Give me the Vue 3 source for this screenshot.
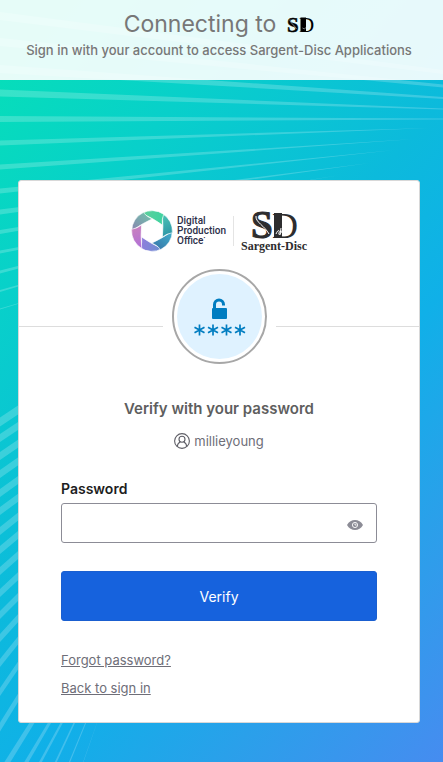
<template>
  <div class="page">
    <!-- Gradient backdrop with light rays -->
    <svg class="backdrop" viewBox="0 0 443 762" preserveAspectRatio="xMinYMin slice" aria-hidden="true">
      <path v-for="(ray, i) in rays" :key="i" :d="ray" fill="#fff" fill-opacity="0.2" />
    </svg>

    <header class="banner">
      <h1>
        Connecting to
        <svg class="banner-logo" viewBox="0 0 54 34" role="img" aria-label="SD">
          <g fill="#000" font-family="Liberation Serif, serif">
            <text x="0" y="31" font-size="42" font-weight="700" stroke="#000" stroke-width="1">S</text>
            <text x="24" y="31" font-size="42">D</text>
            <rect x="27" y="3" width="11" height="28" />
          </g>
          <path d="M6 7c-1 6 9 11 13 19M31 24l4 2 4-4" fill="none" stroke="#e8faf9" stroke-width="1" />
        </svg>
      </h1>
      <p>Sign in with your account to access Sargent-Disc Applications</p>
    </header>

    <main>
      <section class="card">
        <div class="logos">
          <svg class="aperture" viewBox="-21 -21 42 42" aria-hidden="true">
            <defs>
              <linearGradient v-for="(blade, i) in blades" :id="'blade' + i" :key="i"
                gradientUnits="userSpaceOnUse" x1="17" y1="8" x2="1" y2="20">
                <stop offset="0" :stop-color="blade[0]" />
                <stop offset="1" :stop-color="blade[1]" />
              </linearGradient>
            </defs>
            <g transform="scale(-1 1) rotate(30)">
              <path v-for="(blade, i) in blades" :key="i" d="M18.500 8.700Q14 5 12 0Q8 9 .2 20.300A20.300 20.300 0 0 0 18.500 8.700Z"
                :transform="`rotate(${i * 60})`" :fill="`url(#blade${i})`" stroke="#fff" stroke-width="0.600" />
            </g>
          </svg>
          <div class="office">Digital<br>Production<br>Office<sup>•</sup></div>
          <div class="sargent">
            <svg viewBox="0 0 48 30" role="img" aria-label="SD">
              <g fill="#2d2d2f" font-family="Liberation Serif, serif">
                <text x="1" y="28" font-size="39" font-weight="700" stroke="#2d2d2f" stroke-width="1">S</text>
                <text x="22" y="28" font-size="36">D</text>
                <rect x="24" y="3" width="8" height="25" />
              </g>
              <path d="M6 6c-1 6 9 10 13 18" fill="none" stroke="#fff" stroke-width="1" />
              <path d="M26 24c2-5 4-4 3-1s2 1 3-2 2-2 1 1 2 1 3-1M31 18l-1 7" fill="none" stroke="#fff" stroke-width="1" />
            </svg>
            <span>Sargent-Disc</span>
          </div>
        </div>

        <div class="beacon-row">
          <span class="line"></span>
          <div class="beacon">
            <svg viewBox="0 0 85 85" aria-hidden="true">
              <circle cx="42.5" cy="42.5" r="42.5" fill="#dff2ff" />
              <rect x="35" y="34" width="15" height="11" rx="1" fill="#007dc1" />
              <path d="M37.500 34v-3.500a4.500 4.500 0 0 1 9 0v1" fill="none" stroke="#007dc1" stroke-width="3" />
              <g stroke="#007dc1" stroke-width="1.700">
                <path v-for="x in [22.5, 36, 49.5, 63]" :key="x"
                  :d="`M${x} 50.500v11M${x - 5} 53.200l10 5.600M${x - 5} 58.800l10-5.600`" />
              </g>
            </svg>
          </div>
          <span class="line"></span>
        </div>

        <form @submit.prevent>
          <h2>Verify with your password</h2>
          <div class="user">
            <svg viewBox="0 0 16 16" fill="none" stroke="#5e5e66" stroke-width="1.100" aria-hidden="true">
              <circle cx="8" cy="8" r="7.400" />
              <circle cx="8" cy="6.300" r="3" />
              <path d="M3.300 13.500c.2-2.600 1.300-4 3-4.600M12.700 13.500c-.2-2.600-1.300-4-3-4.600" />
            </svg>
            <span>millieyoung</span>
          </div>

          <label for="password">Password</label>
          <div class="field">
            <input id="password" v-model="password" :type="visible ? 'text' : 'password'">
            <button type="button" class="eye" aria-label="Show password" @click="visible = !visible">
              <svg viewBox="0 0 16 10">
                <path d="M0 5C3.500-1.600 12.500-1.600 16 5 12.500 11.600 3.500 11.600 0 5Z" fill="#8c8c96" />
                <circle cx="8" cy="5" r="2.600" fill="none" stroke="#fff" stroke-width="0.900" />
                <path d="M8 3.500V5h1.500" fill="none" stroke="#fff" stroke-width="0.900" />
              </svg>
            </button>
          </div>

          <button type="submit" class="verify">Verify</button>

          <nav>
            <a href="#">Forgot password?</a>
            <a href="#">Back to sign in</a>
          </nav>
        </form>
      </section>
    </main>
  </div>
</template>

<script setup>
import { ref } from 'vue'

const password = ref('')
const visible = ref(false)

// start x, start y, end x, end y, start width, end width
const lines = [
  [0, 16, 443, 72, 8, 4],
  [0, 42, 443, 86, 8, 3],
  [0, 69, 443, 98, 8, 2],
  [0, 93, 443, 109, 7, 1],
  [0, 119, 443, 119, 6, 1],
  [0, 143, 430, 128, 5, 0],
  [0, 167, 415, 139, 5, 0],
  [0, 191, 395, 150, 5, 0],
  [0, 212, 370, 163, 5, 0],
  [0, 232, 340, 175, 4, 0],
  [0, 252, 300, 195, 3, 0],
  [0, 272, 200, 220, 3, 0],
  [0, 291, 100, 262, 2, 0],
  [0, 309, 60, 291, 1, 0],
  [0, 422, 60, 382, 9, 9],
  [0, 438, 60, 398, 8, 8],
  [0, 456, 60, 415, 8, 8],
  [0, 474, 60, 432, 8, 8],
  [0, 493, 60, 450, 8, 8],
  [0, 511, 60, 467, 8, 8],
  [0, 531, 60, 483, 8, 8],
  [0, 550, 60, 500, 8, 8],
  [0, 571, 60, 518, 8, 8],
  [0, 593, 60, 537, 8, 8],
  [0, 615, 60, 555, 8, 8],
  [0, 638, 60, 572, 8, 8],
  [0, 663, 60, 588, 8, 8],
  [0, 692, 60, 604, 8, 8],
  [0, 727, 60, 630, 9, 7],
  [0, 774, 60, 678, 10, 7],
  [0, 807, 60, 705, 9, 5],
  [20, 800, 74, 700, 6, 4],
  [38, 800, 85, 700, 5, 3],
  [54, 800, 95, 700, 4, 2],
  [70, 800, 105, 700, 2, 0]
]

const rays = lines.map(([x1, y1, x2, y2, a, b]) =>
  `M${x1} ${y1 - a / 2}L${x2} ${y2 - b / 2}V${y2 + b / 2}L${x1} ${y1 + a / 2}Z`)

// clockwise pairs, starting from the bottom blade
const blades = [
  ['#8f7fdc', '#6b8fd0'],
  ['#3a7fae', '#3fb0cc'],
  ['#2f9aa8', '#4cc4b4'],
  ['#3fd3a0', '#5fcf9c'],
  ['#74b8ac', '#8a86b0'],
  ['#c77fc0', '#b070d8']
]
</script>

<style>
body {
  margin: 0;
}
</style>

<style scoped>
* {
  box-sizing: border-box;
}

.page {
  position: relative;
  min-height: 100vh;
  padding-bottom: 39px;
  overflow: hidden;
  font-family: Inter, "Liberation Sans", sans-serif;
  background: linear-gradient(131deg, #06e2b5 0%, #08d0ca 24%, #0cbadc 48%, #10b0e8 63%, #2aa0ea 80%, #468cf0 100%);
}

.backdrop {
  position: absolute;
  top: 0;
  left: 0;
  width: 100%;
  height: 100%;
}

.banner {
  position: relative;
  height: 80px;
  padding: 8px 5px 0 0;
  text-align: center;
  color: #777;
  background: rgba(255, 255, 255, 0.9);
}

h1 {
  display: flex;
  justify-content: center;
  align-items: center;
  gap: 11px;
  margin: 0;
  font-size: 23px;
  line-height: 32px;
  font-weight: 400;
}

.banner-logo {
  width: 27px;
  height: 17px;
  overflow: visible;
}

.banner p {
  margin: 0;
  font-size: 13px;
  line-height: 20px;
  font-weight: 500;
  white-space: nowrap;
}

main {
  position: relative;
  padding: 100px 23px 0 18px;
}

.card {
  max-width: 402px;
  margin: 0 auto;
  background: #fff;
  border: 1px solid #d8d8d8;
  border-radius: 3px;
}

.logos {
  display: flex;
  justify-content: center;
  align-items: center;
  height: 88px;
  padding-top: 12px;
}

.aperture {
  width: 42px;
  height: 42px;
}

.office {
  margin-left: 4px;
  padding-right: 7px;
  font: 500 10px/10px Roboto, sans-serif;
  color: #2c2e48;
  border-right: 1px solid #e4e4e4;
}

.office sup {
  font-size: 5px;
  line-height: 0;
}

.sargent {
  display: flex;
  flex-direction: column;
  align-items: center;
  margin-left: 7px;
}

.sargent svg {
  width: 48px;
  height: 30px;
  overflow: visible;
}

.sargent span {
  font: 700 12px/12px "Liberation Serif", serif;
  color: #2d2d2f;
}

.beacon-row {
  display: flex;
  align-items: center;
  gap: 9px;
}

.line {
  flex: 1;
  height: 1px;
  margin-top: 19px;
  background: #ddd;
}

.beacon {
  display: flex;
  width: 95px;
  height: 95px;
  padding: 3px;
  border: 2px solid #a7a7a7;
  border-radius: 50%;
}

form {
  padding: 35px 42px 24px;
}

h2 {
  margin: 0;
  font-size: 15px;
  line-height: 20px;
  font-weight: 600;
  text-align: center;
  color: #5e5e5e;
}

.user {
  display: flex;
  justify-content: center;
  align-items: center;
  gap: 4px;
  margin-top: 12px;
  font-size: 13px;
  line-height: 20px;
  color: #6e6e78;
}

.user svg {
  width: 16px;
  height: 16px;
}

label {
  display: block;
  margin-top: 28px;
  font-size: 14px;
  line-height: 20px;
  font-weight: 600;
  color: #1d1d21;
}

.field {
  display: flex;
  align-items: center;
  height: 40px;
  margin-top: 4px;
  padding-right: 13px;
  border: 1px solid #8c8c96;
  border-radius: 3px;
}

.field input {
  flex: 1;
  min-width: 0;
  height: 100%;
  padding: 0 10px;
  font: inherit;
  border: 0;
  outline: 0;
  background: none;
}

.eye {
  display: flex;
  margin-top: 4px;
  padding: 0;
  border: 0;
  background: none;
}

.eye svg {
  width: 16px;
  height: 10px;
}

.verify {
  width: 100%;
  height: 50px;
  margin-top: 28px;
  padding: 2px 0 0;
  font: 400 14px/20px Inter, sans-serif;
  color: #fff;
  background: #1662dd;
  border: 1px solid #1a5fd0;
  border-radius: 3px;
}

nav {
  display: flex;
  flex-direction: column;
  align-items: flex-start;
  gap: 8px;
  margin-top: 29px;
}

nav a {
  font-size: 13px;
  line-height: 20px;
  color: #6e6e78;
}
</style>
